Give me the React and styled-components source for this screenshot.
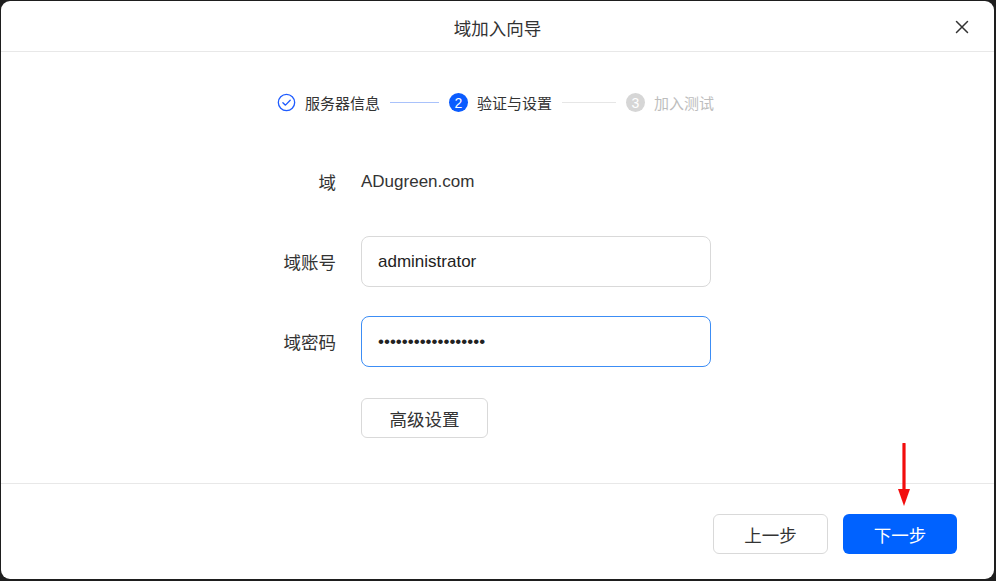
import React from "react";
import styled, { createGlobalStyle } from "styled-components";

const GlobalStyle = createGlobalStyle`
  html, body {
    margin: 0;
    padding: 0;
    background: #1e1e1e;
  }
  body {
    font-family: "Noto Sans CJK SC", "Liberation Sans", sans-serif;
    color: #333;
  }
`;

const steps = [
  { label: "服务器信息", state: "done", line: 49 },
  { label: "验证与设置", state: "active", line: 54 },
  { label: "加入测试", state: "todo" },
];

function StepIcon({ state, index }) {
  if (state === "done") {
    return (
      <svg width="19" height="19" viewBox="0 0 20 20">
        <circle cx="10" cy="10" r="8.6" fill="none" stroke="#1f5cff" strokeWidth="1.4" />
        <path d="M6.2 10.2 L8.9 12.8 L13.9 7.6" fill="none" stroke="#1f5cff" strokeWidth="1.4" strokeLinecap="round" strokeLinejoin="round" />
      </svg>
    );
  }
  return <StepDot state={state}>{index + 1}</StepDot>;
}

function App() {
  return (
    <>
      <GlobalStyle />
      <Backdrop>
        <Modal>
          <Header>
            <Title>域加入向导</Title>
            <Close aria-label="close">
              <svg width="14" height="14" viewBox="0 0 14 14">
                <path d="M1.5 1.5 L12.5 12.5 M12.5 1.5 L1.5 12.5" stroke="#333" strokeWidth="1.5" strokeLinecap="round" />
              </svg>
            </Close>
          </Header>

          <Body>
            <Stepper>
              {steps.map((s, i) => (
                <React.Fragment key={s.label}>
                  <Step>
                    <StepIcon state={s.state} index={i} />
                    <StepLabel state={s.state}>{s.label}</StepLabel>
                  </Step>
                  {s.line && <StepLine done={s.state === "done"} style={{ width: s.line }} />}
                </React.Fragment>
              ))}
            </Stepper>

            <Form>
              <Label>域</Label>
              <Value>ADugreen.com</Value>

              <Label>域账号</Label>
              <Input defaultValue="administrator" />

              <Label>域密码</Label>
              <Input type="password" defaultValue="abcdefghijklmnopq1" active />

              <span />
              <ButtonCell>
                <GhostButton>高级设置</GhostButton>
              </ButtonCell>
            </Form>
          </Body>

          <Footer>
            <GhostButton wide>上一步</GhostButton>
            <PrimaryButton>下一步</PrimaryButton>
            <Arrow>
              <svg width="16" height="64" viewBox="0 0 16 64">
                <path d="M8 1 L8 48" stroke="#f20d0d" strokeWidth="3.2" strokeLinecap="round" />
                <path d="M2 46 L8 63 L14 46 Z" fill="#f20d0d" />
              </svg>
            </Arrow>
          </Footer>
        </Modal>
      </Backdrop>
    </>
  );
}

const Backdrop = styled.div`
  width: 996px;
  height: 581px;
  box-sizing: border-box;
  padding: 1px 2px 2px 1px;
  display: flex;
`;

const Modal = styled.div`
  flex: 1;
  background: #fff;
  border-radius: 9px;
  display: flex;
  flex-direction: column;
  overflow: hidden;
  position: relative;
`;

const Header = styled.div`
  height: 50px;
  border-bottom: 1px solid #e8e8e8;
  display: flex;
  align-items: center;
  justify-content: center;
  position: relative;
`;

const Title = styled.div`
  font-size: 17.5px;
  color: #333;
  margin-top: 2px;
`;

const Close = styled.button`
  position: absolute;
  right: 25px;
  top: 19px;
  border: none;
  background: none;
  padding: 0;
  width: 14px;
  height: 14px;
  display: flex;
`;

const Body = styled.div`
  flex: 1;
  padding-top: 41px;
`;

const Stepper = styled.div`
  display: flex;
  align-items: center;
  justify-content: center;
  height: 19px;
  padding-right: 4px;
`;

const Step = styled.div`
  display: flex;
  align-items: center;
  gap: 9px;
`;

const StepDot = styled.span`
  width: 19px;
  height: 19px;
  border-radius: 50%;
  background: ${p => (p.state === "active" ? "#0a5cff" : "#d6d6d6")};
  color: #fff;
  font-family: "Liberation Sans", sans-serif;
  font-size: 14px;
  display: flex;
  align-items: center;
  justify-content: center;
`;

const StepLabel = styled.span`
  font-size: 15px;
  color: ${p => (p.state === "todo" ? "#bdbdbd" : "#333")};
`;

const StepLine = styled.span`
  height: 1px;
  margin: 0 10px;
  background: ${p => (p.done ? "#a9c2fb" : "#e6e6e6")};
`;

const Form = styled.div`
  display: grid;
  grid-template-columns: 80px 350px;
  grid-template-rows: 51px 51px 51px 42px;
  column-gap: 25px;
  row-gap: 29px;
  margin-top: 44px;
  padding-left: 255px;
  align-items: center;
`;

const ButtonCell = styled.div`
  align-self: start;
`;

const Label = styled.div`
  text-align: right;
  font-size: 17.5px;
  color: #333;
`;

const Value = styled.div`
  font-family: "Liberation Sans", sans-serif;
  font-size: 17px;
  color: #333;
`;

const Input = styled.input`
  height: 51px;
  box-sizing: border-box;
  border: 1px solid ${p => (p.active ? "#3c8df5" : "#d9d9d9")};
  border-radius: 8px;
  padding: 0 16px;
  font-family: "Liberation Sans", sans-serif;
  font-size: 17px;
  color: #222;
  outline: none;
  width: 100%;
`;

const GhostButton = styled.button`
  height: 40px;
  width: ${p => (p.wide ? "115px" : "127px")};
  margin-top: ${p => (p.wide ? "0" : "2px")};
  border: 1px solid #d9d9d9;
  border-radius: 6px;
  background: #fff;
  font-family: "Noto Sans CJK SC", sans-serif;
  font-size: 17.5px;
  color: #333;
`;

const PrimaryButton = styled.button`
  height: 40px;
  width: 114px;
  border: none;
  border-radius: 6px;
  background: #0062ff;
  font-family: "Noto Sans CJK SC", sans-serif;
  font-size: 17.5px;
  color: #fff;
`;

const Footer = styled.div`
  height: 96px;
  box-sizing: border-box;
  border-top: 1px solid #e8e8e8;
  display: flex;
  justify-content: flex-end;
  align-items: flex-start;
  gap: 15px;
  padding: 30px 37px 0 0;
  position: relative;
`;

const Arrow = styled.div`
  position: absolute;
  right: 82px;
  top: -41px;
  line-height: 0;
`;

export default App;
